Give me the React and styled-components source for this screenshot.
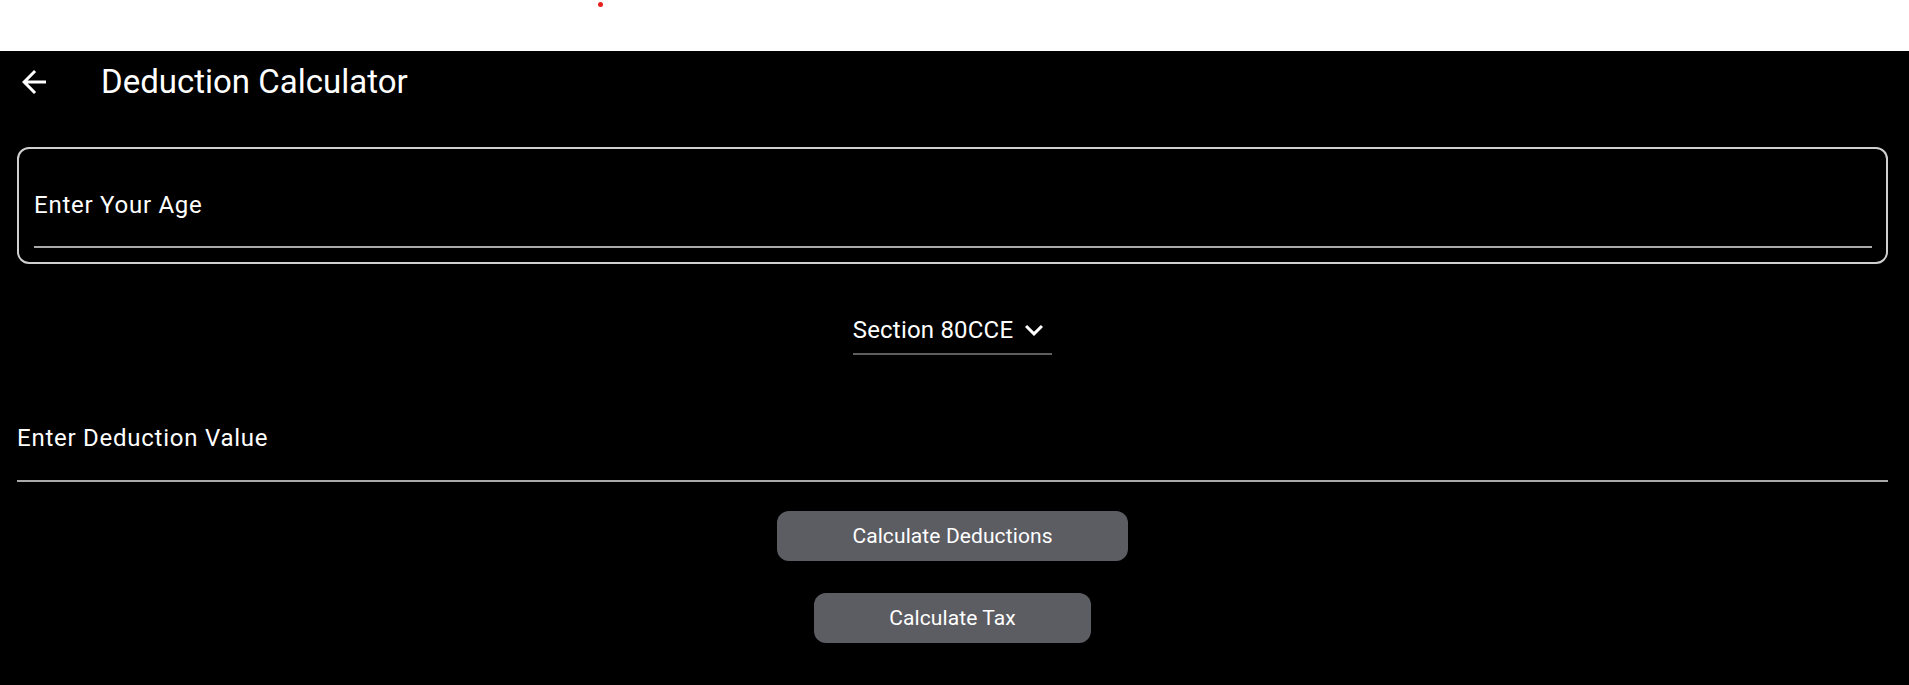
import React from 'react';
import styled, { createGlobalStyle } from 'styled-components';

const GlobalStyle = createGlobalStyle`
    html, body {
        margin: 0;
        padding: 0;
        background: #000000;
        font-family: Roboto, "Noto Sans", "Liberation Sans", sans-serif;
    }
`;

const Page = styled.div`
    min-height: 685px;
    background: #000000;
    color: #ffffff;
    display: flex;
    flex-direction: column;
`;

// white strip on top with the little red dot
const TopStrip = styled.div`
    height: 51px;
    background: #ffffff;
    padding: 2px 0 0 598px;
    box-sizing: border-box;
`;

const RedDot = styled.div`
    width: 5px;
    height: 5px;
    border-radius: 50%;
    background: #e8201c;
`;

const Header = styled.div`
    height: 62px;
    display: flex;
    align-items: center;
    padding-left: 16px;
    gap: 49px;
`;

const BackButton = styled.div`
    width: 36px;
    height: 36px;
    display: flex;
    align-items: center;
    justify-content: center;
`;

const Title = styled.div`
    font-size: 33px;
    font-weight: 400;
    line-height: 40px;
`;

const Content = styled.div`
    display: flex;
    flex-direction: column;
    align-items: stretch;
    padding: 0 21px 0 17px;
`;

const AgeCard = styled.div`
    margin-top: 34px;
    border: 2px solid #cfcfcf;
    border-radius: 12px;
    padding: 15px 14px 14px 15px;
`;

const Field = styled.div`
    display: flex;
    align-items: ${p => (p.$top ? 'flex-start' : 'center')};
    height: ${p => p.$height}px;
    margin-top: ${p => p.$mt || 0}px;
    border-bottom: 2px solid #a9a9a9;
    font-size: 24px;
    line-height: 36px;
    letter-spacing: 0.75px;
`;

const DropRow = styled.div`
    display: flex;
    justify-content: center;
    margin-top: 48px;
`;

const Dropdown = styled.div`
    display: flex;
    align-items: center;
    gap: 3px;
    padding-bottom: 5px;
    border-bottom: 2px solid #5e5e5e;
    font-size: 24px;
    line-height: 36px;
    letter-spacing: 0.2px;
`;

const Buttons = styled.div`
    display: flex;
    flex-direction: column;
    align-items: center;
    gap: 32px;
    margin-top: 29px;
`;

const Button = styled.button`
    height: 50px;
    padding: 0 75px;
    border: none;
    border-radius: 12px;
    background: #5c5c63;
    color: #ffffff;
    font-family: Roboto, "Liberation Sans", sans-serif;
    font-size: 21px;
    font-weight: 400;
    letter-spacing: 0.1px;
`;

function App() {
    return (
        <Page>
            <GlobalStyle />
            <TopStrip>
                <RedDot />
            </TopStrip>
            <Header>
                <BackButton>
                    <svg width="36" height="36" viewBox="0 0 24 24" fill="#ffffff">
                        <path d="M20 11H7.83l5.59-5.59L12 4l-8 8 8 8 1.41-1.41L7.83 13H20v-2z" />
                    </svg>
                </BackButton>
                <Title>Deduction Calculator</Title>
            </Header>
            <Content>
                <AgeCard>
                    <Field $height={82}>Enter Your Age</Field>
                </AgeCard>
                <DropRow>
                    <Dropdown>
                        Section 80CCE
                        <svg width="36" height="36" viewBox="0 0 24 24" fill="#ffffff">
                            <path d="M16.59 8.59L12 13.17 7.41 8.59 6 10l6 6 6-6z" />
                        </svg>
                    </Dropdown>
                </DropRow>
                <Field $height={60} $top $mt={65}>
                    Enter Deduction Value
                </Field>
                <Buttons>
                    <Button>Calculate Deductions</Button>
                    <Button>Calculate Tax</Button>
                </Buttons>
            </Content>
        </Page>
    );
}

export default App;
